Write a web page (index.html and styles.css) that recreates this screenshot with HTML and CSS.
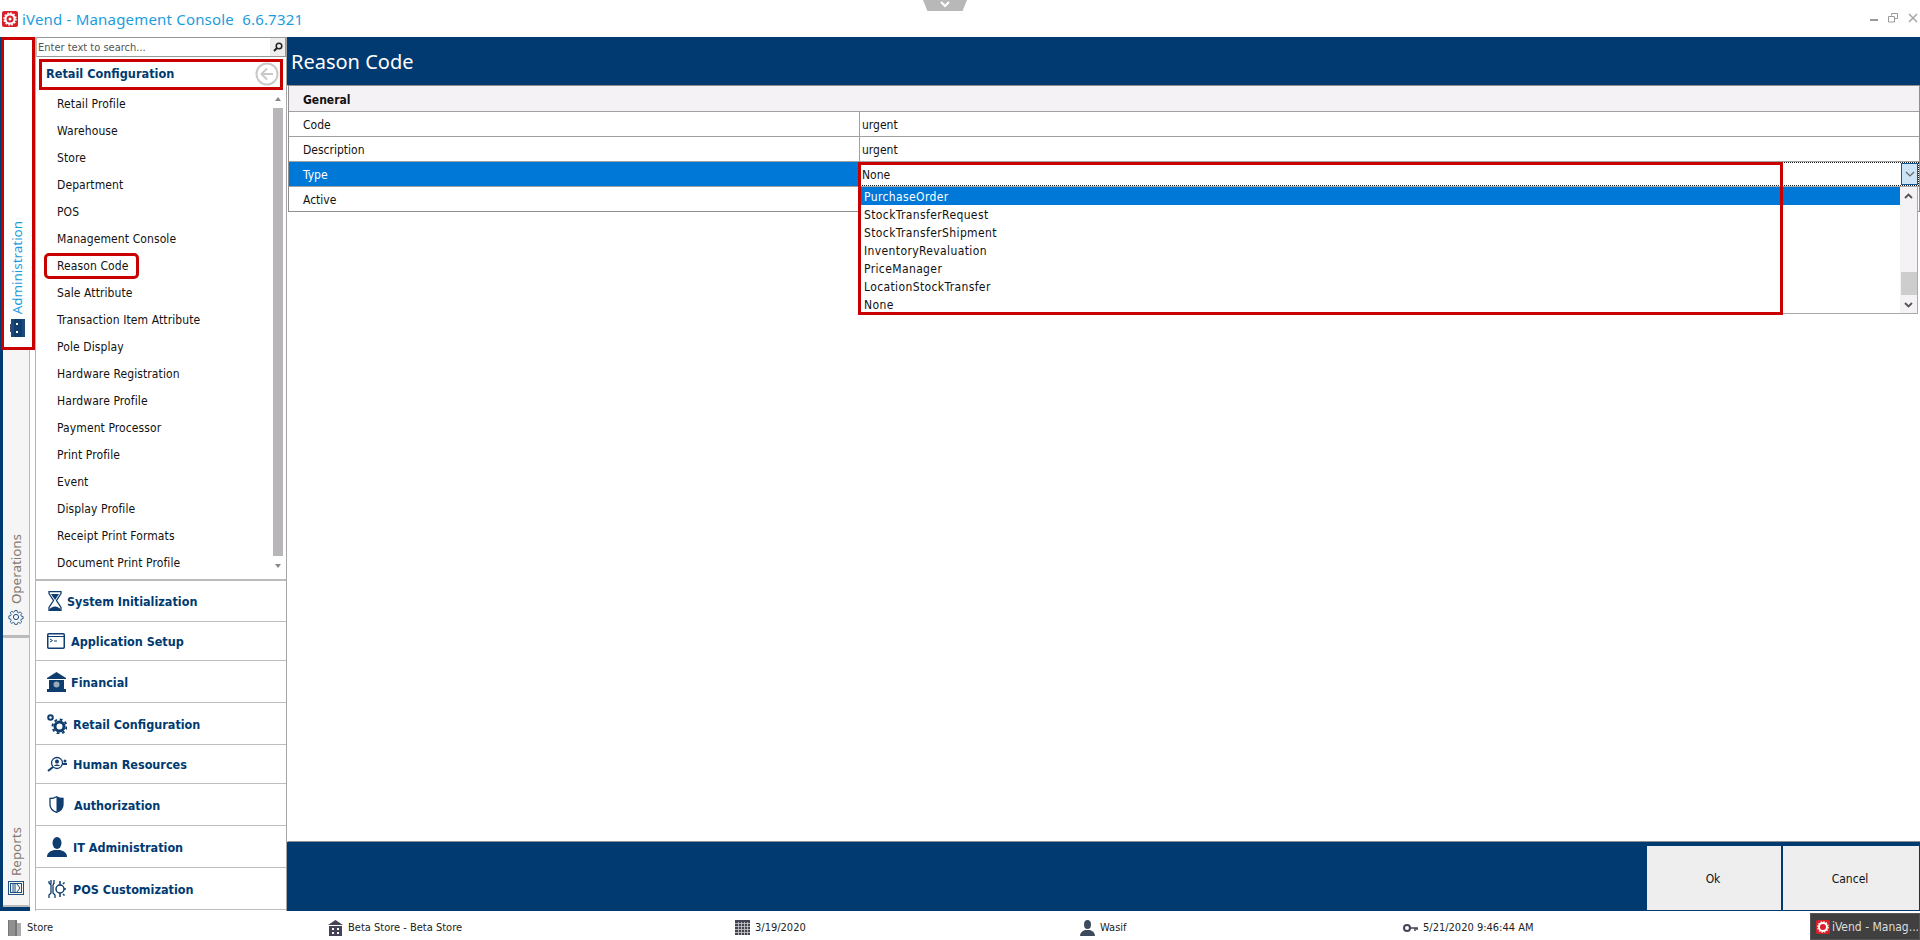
FILE: index.html
```html
<!DOCTYPE html>
<html lang="en">
<head>
<meta charset="utf-8">
<title>iVend - Management Console</title>
<link rel="stylesheet" href="styles.css">
</head>
<body>
<div class="app">
  <header class="titlebar">
    <svg class="logo" viewBox="0 0 16 16"><rect width="16" height="16" rx="2" fill="#d9202a"/><circle cx="8" cy="8" r="4.6" fill="none" stroke="#fff" stroke-width="2.2"/><circle cx="8" cy="8" r="6" fill="none" stroke="#fff" stroke-width="1.4" stroke-dasharray="1.6 1.5"/><circle cx="8" cy="8" r="1.5" fill="#fff"/></svg>
    <span class="app-title">iVend - Management Console&nbsp; 6.6.7321</span>
    <div class="win-controls">
      <svg class="win-min" width="8" height="2" viewBox="0 0 8 2"><rect width="8" height="2" fill="#9a9a9a"/></svg>
      <svg width="10" height="10" viewBox="0 0 10 10"><path d="M3.5 2.5V.5h6v5h-2.5M.5 3.5h6v5.500h-6z" fill="none" stroke="#9a9a9a"/></svg>
      <svg width="10" height="10" viewBox="0 0 10 10"><path d="M1 1l8 8M9 1l-8 8" stroke="#a5a5a5" stroke-width="1.500"/></svg>
    </div>
  </header>

  <div class="workspace">
    <nav class="rail">
      <div class="rail-tab tab-admin active">
        <span class="rail-label">Administration</span>
        <svg class="rail-icon" width="15" height="18" viewBox="0 0 15 18"><rect x="1" y="0" width="14" height="18" fill="#1c4a78"/><rect x="4" y="0" width="8" height="18" fill="#0f3d6e"/><rect x="0" y="5" width="2" height="8" fill="#446"/><rect x="6" y="4" width="2" height="2" fill="#fff"/><rect x="6" y="12" width="2" height="2" fill="#fff"/></svg>
      </div>
      <div class="rail-tab tab-ops">
        <span class="rail-label">Operations</span>
        <svg class="rail-icon" width="16" height="16" viewBox="0 0 16 16"><circle cx="8" cy="8" r="2.600" fill="none" stroke="#1f4f80"/><path d="M6.800.8h2.400l.4 2 1.400.6 1.700-1.100 1.700 1.700-1.100 1.700.6 1.400 2 .4v2.400l-2 .4-.6 1.400 1.100 1.700-1.700 1.700-1.700-1.100-1.400.6-.4 2H6.800l-.4-2-1.400-.6-1.700 1.100-1.700-1.700 1.100-1.700-.6-1.400-2-.4V6.800l2-.4.6-1.400-1.100-1.700 1.700-1.700 1.700 1.100 1.400-.6z" fill="none" stroke="#1f4f80" transform="translate(.8 .8) scale(.9)"/></svg>
      </div>
      <div class="rail-tab tab-reports">
        <span class="rail-label">Reports</span>
        <svg class="rail-icon" width="16" height="14" viewBox="0 0 16 14"><rect x=".5" y=".5" width="15" height="13" fill="none" stroke="#1f4f80"/><rect x="2.500" y="2.500" width="11" height="9" fill="none" stroke="#1f4f80"/><path d="M5 3v8M7 3v8M9 3l3 4-3 4" fill="none" stroke="#1f4f80"/></svg>
      </div>
      <div class="rail-end"></div>
    </nav>

    <aside class="sidebar">
      <div class="search">
        <span class="search-text">Enter text to search...</span>
        <span class="search-btn"><svg width="10" height="10" viewBox="0 0 10 10"><circle cx="6" cy="4" r="2.800" fill="none" stroke="#222" stroke-width="1.500"/><path d="M4 6L1 9" stroke="#222" stroke-width="2"/></svg></span>
      </div>
      <div class="section-head">
        <span class="section-title">Retail Configuration</span>
        <svg width="24" height="24" viewBox="0 0 24 24"><circle cx="12" cy="12" r="10.500" fill="#fff" stroke="#c9c9c9" stroke-width="2"/><path d="M18 12H7M12 6.500L6.500 12l5.500 5.500" fill="none" stroke="#c9c9c9" stroke-width="2"/></svg>
      </div>
      <div class="list-wrap">
        <ul class="list">
          <li>Retail Profile</li>
          <li>Warehouse</li>
          <li>Store</li>
          <li>Department</li>
          <li>POS</li>
          <li>Management Console</li>
          <li>Reason Code</li>
          <li>Sale Attribute</li>
          <li>Transaction Item Attribute</li>
          <li>Pole Display</li>
          <li>Hardware Registration</li>
          <li>Hardware Profile</li>
          <li>Payment Processor</li>
          <li>Print Profile</li>
          <li>Event</li>
          <li>Display Profile</li>
          <li>Receipt Print Formats</li>
          <li>Document Print Profile</li>
        </ul>
        <div class="list-scroll">
          <span class="arrow-up"></span>
          <span class="list-thumb"></span>
          <span class="arrow-down"></span>
        </div>
      </div>
      <div class="accordion">
        <div class="acc-row acc-a">
          <svg class="acc-icon" width="14" height="20" viewBox="0 0 14 20"><path d="M1 .5h12v2l-4.500 7 4.500 7v3H1v-3l4.500-7L1 2.500z" fill="none" stroke="#0f3d6e" stroke-width="1.300"/><path d="M1 19.500c1-3 4-4 6-4s5 1 6 4z" fill="#0f3d6e"/><path d="M3 3h8L7 9z" fill="#0f3d6e"/></svg>
          <span>System Initialization</span>
        </div>
        <div class="acc-row acc-b">
          <svg class="acc-icon" width="18" height="16" viewBox="0 0 18 16"><rect x=".75" y=".75" width="16.500" height="14.500" rx="1" fill="none" stroke="#0f3d6e" stroke-width="1.500"/><path d="M1 3.500h16" stroke="#0f3d6e"/><path d="M3 6l2.500 1.500L3 9M7 8h3" fill="none" stroke="#0f3d6e"/></svg>
          <span>Application Setup</span>
        </div>
        <div class="acc-row acc-c">
          <svg class="acc-icon" width="19" height="20" viewBox="0 0 19 20"><path d="M9.500 0L19 6v1H0V6z" fill="#0f3d6e"/><rect x="2" y="8" width="15" height="9" fill="#0f3d6e"/><circle cx="9.500" cy="12.500" r="3" fill="#9ab"/><rect y="17" width="19" height="3" fill="#0f3d6e"/></svg>
          <span>Financial</span>
        </div>
        <div class="acc-row acc-d">
          <svg class="acc-icon" width="20" height="20" viewBox="0 0 20 20"><circle cx="3.500" cy="3.500" r="2.300" fill="none" stroke="#0f3d6e" stroke-width="2"/><circle cx="12.500" cy="12.500" r="4.500" fill="none" stroke="#0f3d6e" stroke-width="3"/><circle cx="12.500" cy="12.500" r="7" fill="none" stroke="#0f3d6e" stroke-width="2" stroke-dasharray="2.800 2.700"/></svg>
          <span>Retail Configuration</span>
        </div>
        <div class="acc-row acc-e">
          <svg class="acc-icon" width="20" height="16" viewBox="0 0 20 16"><circle cx="10" cy="7" r="5.500" fill="none" stroke="#0f3d6e" stroke-width="1.300"/><circle cx="10" cy="5.500" r="2" fill="#0f3d6e"/><path d="M7 10c1-2 5-2 6 0z" fill="#0f3d6e"/><path d="M6 11L1 15" stroke="#0f3d6e" stroke-width="2"/><circle cx="18" cy="5" r="1.500" fill="#0f3d6e"/><rect x="16" y="7" width="4" height="2" fill="#0f3d6e"/></svg>
          <span>Human Resources</span>
        </div>
        <div class="acc-row acc-f">
          <svg class="acc-icon" width="15" height="17" viewBox="0 0 15 17"><path d="M7.500.7C5.500 2 3 2.500 1 2.500v6c0 3.500 3 6.500 6.500 7.800C11 15 14 12 14 8.500v-6C12 2.500 9.500 2 7.500.7z" fill="#fff" stroke="#0f3d6e" stroke-width="1.300"/><path d="M7.500.7C9.500 2 12 2.500 14 2.500v6c0 3.500-3 6.500-6.500 7.800z" fill="#0f3d6e"/></svg>
          <span>Authorization</span>
        </div>
        <div class="acc-row acc-g">
          <svg class="acc-icon" width="20" height="20" viewBox="0 0 20 20"><ellipse cx="10" cy="6" rx="4.500" ry="6" fill="#0f3d6e"/><path d="M0 20c0-4 3-6 7-7h6c4 1 7 3 7 7z" fill="#0f3d6e"/></svg>
          <span>IT Administration</span>
        </div>
        <div class="acc-row acc-h">
          <svg class="acc-icon" width="18" height="20" viewBox="0 0 18 20"><path d="M3 1v4M6 1v4M1 2v2l2 2v8l-2 2v3M6 2v2L5 6v8l2 2v3" fill="none" stroke="#0f3d6e" stroke-width="1.300"/><circle cx="12" cy="10" r="4" fill="none" stroke="#0f3d6e" stroke-width="1.500"/><path d="M12 2v4M12 14v4M16 10h2M15 5l1.500-1.500M15 15l1.500 1.500" stroke="#0f3d6e" stroke-width="1.500"/></svg>
          <span>POS Customization</span>
        </div>
      </div>
    </aside>

    <main class="main">
      <h1 class="page-title">Reason Code</h1>
      <div class="content">
        <div class="grid">
          <div class="grid-group">General</div>
          <div class="grid-row"><div class="grid-name">Code</div><div class="grid-value">urgent</div></div>
          <div class="grid-row"><div class="grid-name">Description</div><div class="grid-value">urgent</div></div>
          <div class="grid-row selected"><div class="grid-name">Type</div><div class="grid-value editing">None
            <span class="drop-btn"><svg width="10" height="6" viewBox="0 0 10 6"><path d="M1 1l4 4 4-4" fill="none" stroke="#666" stroke-width="1.200"/></svg></span>
          </div></div>
          <div class="grid-row last"><div class="grid-name">Active</div><div class="grid-value"></div></div>
        </div>
        <div class="dropdown">
          <ul class="options">
            <li class="current">PurchaseOrder</li>
            <li>StockTransferRequest</li>
            <li>StockTransferShipment</li>
            <li>InventoryRevaluation</li>
            <li>PriceManager</li>
            <li>LocationStockTransfer</li>
            <li>None</li>
          </ul>
          <div class="drop-scroll">
            <svg width="9" height="6" viewBox="0 0 9 6"><path d="M1 5l3.500-3.500L8 5" fill="none" stroke="#555" stroke-width="1.800"/></svg>
            <span class="drop-thumb"></span>
            <svg width="9" height="6" viewBox="0 0 9 6"><path d="M1 1l3.500 3.500L8 1" fill="none" stroke="#555" stroke-width="1.800"/></svg>
          </div>
        </div>
      </div>
      <footer class="actions">
        <button class="action">Ok</button>
        <button class="action action-wide">Cancel</button>
      </footer>
    </main>
  </div>

  <footer class="statusbar">
    <div class="st-item st-a"><svg width="13" height="16" viewBox="0 0 13 16"><rect width="9" height="16" fill="#777"/><rect x="9" y="3" width="4" height="13" fill="#aaa"/><path d="M2 0v16M4 0v16M6 0v16" stroke="#aaa"/></svg><span>Store</span></div>
    <div class="st-item st-b"><svg width="15" height="16" viewBox="0 0 15 16"><path d="M7.500 0L15 5H0z" fill="#445"/><rect x="1" y="6" width="13" height="10" fill="#445"/><rect x="4" y="8" width="2" height="2" fill="#fff"/><rect x="9" y="8" width="2" height="2" fill="#fff"/><rect x="4" y="12" width="2" height="2" fill="#fff"/><rect x="9" y="12" width="2" height="2" fill="#fff"/></svg><span>Beta Store - Beta Store</span></div>
    <div class="st-item st-c"><svg width="15" height="15" viewBox="0 0 15 15"><rect width="15" height="15" fill="#445"/><path d="M0 3.500h15M0 6.500h15M0 9.500h15M0 12.500h15M3.500 2v13M6.500 2v13M9.500 2v13M12.500 2v13" stroke="#ccc" stroke-width=".8"/></svg><span>3/19/2020</span></div>
    <div class="st-item st-d"><svg width="15" height="16" viewBox="0 0 15 16"><ellipse cx="7.500" cy="4.500" rx="3.500" ry="4.500" fill="#3c4a5c"/><path d="M0 16c0-3 2-5 5-6h5c3 1 5 3 5 6z" fill="#3c4a5c"/></svg><span>Wasif</span></div>
    <div class="st-item st-e"><svg width="15" height="10" viewBox="0 0 15 10"><circle cx="4" cy="5" r="3" fill="none" stroke="#445" stroke-width="2"/><path d="M7 5h8M12 5v3M14 5v2" stroke="#445" stroke-width="1.500"/></svg><span>5/21/2020 9:46:44 AM</span></div>
    <div class="task-btn">
      <svg width="16" height="16" viewBox="0 0 16 16"><rect width="16" height="16" rx="2" fill="#d9202a"/><circle cx="8" cy="8" r="4.600" fill="none" stroke="#fff" stroke-width="2.200"/><circle cx="8" cy="8" r="6" fill="none" stroke="#fff" stroke-width="1.400" stroke-dasharray="1.600 1.500"/></svg>
      <span>iVend - Manag...</span>
    </div>
  </footer>

  <div class="handle"><svg width="10" height="7" viewBox="0 0 10 7"><path d="M1 1l4 4 4-4" fill="none" stroke="#fff" stroke-width="2"/></svg></div>
  <div class="mark mark-admin"></div>
  <div class="mark mark-head"></div>
  <div class="mark mark-item"></div>
  <div class="mark mark-drop"></div>
</div>
</body>
</html>
```
FILE: styles.css
```css
* { box-sizing: border-box; }
html, body { margin: 0; height: 100%; }
body { font-family: "DejaVu Sans Condensed", "DejaVu Sans", sans-serif; font-size: 12px; color: #111; background: #fff; overflow: hidden; }
ul { list-style: none; margin: 0; padding: 0; }
.app { position: relative; width: 1920px; height: 940px; display: flex; flex-direction: column; }

.titlebar { height: 37px; flex: none; display: flex; align-items: center; padding-left: 2px; gap: 4px; }
.logo { width: 16px; height: 16px; flex: none; }
.app-title { font-family: "Noto Sans", sans-serif; font-size: 15px; color: #1c9ce0; letter-spacing: .19px; white-space: nowrap; }
.win-controls { margin-left: auto; display: flex; align-items: flex-start; gap: 10px; padding: 13px 2px 0 0; height: 37px; }
.win-min { margin-top: 6px; }

.workspace { flex: 1; min-height: 0; display: flex; background: #003a70; }

.rail { width: 36px; flex: none; display: flex; flex-direction: column; padding-left: 3px; background: linear-gradient(to right, #003a70 3px, #fff 3px); border-right: 1px solid #b5b5b5; }
.rail-tab { width: 27px; flex: none; display: flex; flex-direction: column; align-items: center; justify-content: flex-end; background: #f5f5f5; border-right: 1px solid #bbb; color: #86786e; }
.rail-label { writing-mode: vertical-rl; transform: rotate(180deg); font-family: "Noto Sans", sans-serif; font-size: 13.4px; }
.rail-icon { margin-top: 5px; flex: none; }
.tab-admin { height: 313px; background: #fff; border-right: 0; width: 31px; color: #1c9ce0; padding: 0 3px 13px 0; }
.tab-ops { height: 288px; padding-bottom: 10px; border-bottom: 3px solid #bbb; }
.tab-reports { height: 269px; padding-bottom: 10px; border-bottom: 2px solid #bbb; }
.rail-end { flex: 1; width: 27px; background: #003a70; }

.sidebar { width: 251px; flex: none; background: #fff; border-right: 1px solid #a5a5a5; display: flex; flex-direction: column; }
.search { height: 20px; flex: none; display: flex; align-items: center; justify-content: space-between; border: 1px solid #999; border-left-color: #bbb; padding-left: 1px; font-size: 11px; color: #555; }
.search-btn { width: 15px; height: 18px; background: #eee; display: flex; align-items: center; justify-content: center; }
.section-head { height: 33px; flex: none; display: flex; align-items: center; justify-content: space-between; padding: 0 7px 0 10px; }
.section-title { font-weight: 700; font-size: 12.6px; color: #003a70; }
.list-wrap { height: 489px; flex: none; display: flex; }
.list { flex: 1; padding: 0 0 0 21px; }
.list li { height: 27px; display: flex; align-items: center; color: #111; letter-spacing: .1px; }
.list-scroll { width: 15px; margin-right: 1px; display: flex; flex-direction: column; align-items: center; padding-top: 7px; }
.list-thumb { width: 10px; height: 448px; margin: 7px 0 8px; background: #b8b6b8; }
.arrow-up { border: 3px solid transparent; border-bottom: 4px solid #888; border-top: 0; }
.arrow-down { border: 3px solid transparent; border-top: 4px solid #888; border-bottom: 0; }

.accordion { flex: 1; border-top: 2px solid #bbb; display: flex; flex-direction: column; }
.acc-row { flex: none; display: flex; align-items: center; padding-left: 11px; gap: 5px; font-weight: 700; font-size: 12.5px; color: #003a70; border-bottom: 1px solid #bdbdbd; }
.acc-row span { padding-top: 1px; }
.acc-icon { flex: none; }
.acc-a { height: 41px; padding-left: 12px; gap: 5px; }
.acc-b { height: 39px; gap: 6px; padding-left: 11px; }
.acc-c { height: 42px; gap: 5px; }
.acc-d { height: 42px; gap: 6px; }
.acc-e { height: 39px; gap: 6px; }
.acc-f { height: 42px; gap: 10px; padding-left: 13px; }
.acc-g { height: 42px; gap: 6px; }
.acc-h { height: 42px; gap: 7px; padding-left: 12px; }

.main { flex: 1; min-width: 0; display: flex; flex-direction: column; }
.page-title { margin: 0; height: 48px; flex: none; padding-left: 4px; display: flex; align-items: center; font-family: "Noto Sans", sans-serif; font-size: 20px; font-weight: 400; color: #fff; }
.content { flex: 1; position: relative; background: #fff; border-left: 1px solid #fff; border-top: 1px solid #8f8f8f; border-bottom: 1px solid #8f8f8f; }
.grid { border: 1px solid #8f8f8f; border-top: 0; }
.grid-group { height: 26px; padding: 2px 0 0 14px; background: #f5f2f6; border-bottom: 1px solid #a0a0a0; display: flex; align-items: center; font-weight: 700; }
.grid-row { height: 25px; display: flex; border-bottom: 1px solid #a0a0a0; }
.grid-row.last { border-bottom: 0; height: 24px; }
.grid-name { width: 571px; flex: none; display: flex; align-items: center; padding: 2px 0 0 14px; border-right: 1px solid #a0a0a0; }
.grid-value { flex: 1; display: flex; align-items: center; padding: 2px 0 0 2px; position: relative; }
.selected .grid-name { background: #0078d7; color: #fff; }
.editing { outline: 1px dotted #222; outline-offset: -1px; }
.drop-btn { position: absolute; right: 1px; top: 1px; width: 17px; height: 22px; background: #cde4f7; border: 1px solid #0a5a9c; display: flex; align-items: center; justify-content: center; }

.dropdown { position: absolute; left: 571px; top: 100px; width: 1059px; height: 128px; background: #fff; border: 1px solid #aaa; display: flex; z-index: 2; }
.options { flex: 1; padding-left: 1px; }
.options li { height: 18px; display: flex; align-items: center; padding: 1px 0 0 3px; letter-spacing: .38px; }
.options .current { background: #0078d7; color: #fff; }
.drop-scroll { width: 17px; background: #f5f2f6; display: flex; flex-direction: column; align-items: center; padding-top: 6px; }
.drop-thumb { width: 16px; height: 23px; background: #cdcdcd; margin: 73px 0 7px; }

.actions { height: 69px; flex: none; display: flex; justify-content: flex-end; gap: 2px; padding: 4px 1px 1px 0; }
.action { width: 134px; border: 0; background: #eee; font-family: inherit; font-size: 12px; color: #111; padding: 1px 2px 0 0; }
.action-wide { width: 136px; }

.statusbar { height: 29px; flex: none; display: grid; grid-template-columns: 320px 407px 345px 323px 407px 118px; align-items: center; padding-left: 8px; background: #fff; color: #222; }
.st-item { display: flex; align-items: center; gap: 5px; font-size: 11px; padding-top: 4px; }
.st-a { gap: 6px; }
.task-btn { height: 27px; margin-top: 2px; width: 110px; background: #404040; border: 1px solid #555; color: #ddd; display: flex; align-items: center; gap: 2px; padding-left: 5px; font-size: 12px; white-space: nowrap; overflow: hidden; }

.handle { position: absolute; left: 923px; top: 0; width: 44px; height: 11px; background: #b8b8b8; clip-path: polygon(0 0, 100% 0, 90% 100%, 10% 100%); display: flex; justify-content: center; padding-top: 1px; }
.mark { position: absolute; border: 3px solid #c80000; pointer-events: none; z-index: 3; }
.mark-admin { left: 1px; top: 37px; width: 34px; height: 313px; }
.mark-head { left: 39px; top: 59px; width: 244px; height: 31px; }
.mark-item { left: 44px; top: 253px; width: 95px; height: 26px; border-radius: 5px; }
.mark-drop { left: 858px; top: 162px; width: 925px; height: 153px; }
```
